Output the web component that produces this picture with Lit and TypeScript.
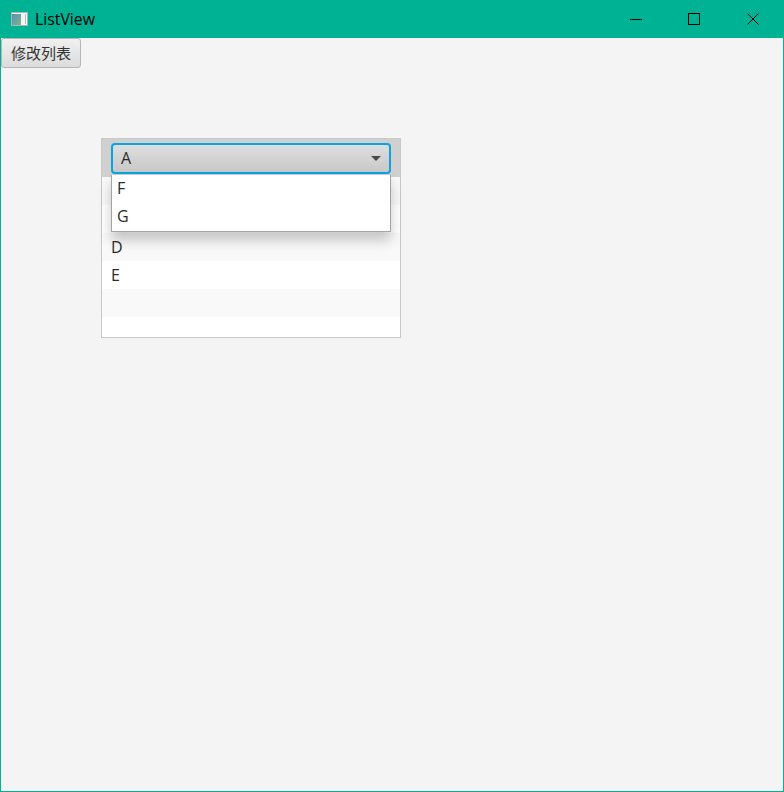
import { LitElement, html, css } from "lit";
import { customElement } from "lit/decorators.js";

@customElement("app-root")
export class AppRoot extends LitElement {
  static styles = css`
    :host { display: block; width: 784px; height: 792px; font-family: "Open Sans", "Noto Sans CJK SC", sans-serif; color: #333; }
    * { box-sizing: border-box; }
    .win { width: 784px; height: 792px; border: 1px solid #00b294; border-top: 0; background: #f4f4f4; display: flex; flex-direction: column; overflow: hidden; }
    .title { height: 38px; margin: 0 -1px; background: #00b294; display: flex; align-items: center; padding: 0 2px 0 11px; flex: none; }
    .title .app { display: block; margin-right: 7px; }
    .title .name { font-size: 15.8px; color: #000; flex: 1; line-height: 38px; }
    .ctrl { width: 58.5px; height: 38px; display: flex; align-items: center; justify-content: center; }
    .content { flex: 1; display: flex; flex-direction: column; align-items: flex-start; }
    .btn { width: 80px; height: 30px; border: 1px solid #b6b6b6; border-radius: 3px; background: linear-gradient(#f0f0f0, #dcdcdc); font-size: 15px; line-height: 26px; padding-bottom: 1px; color: #333; display: flex; align-items: center; justify-content: center; font-family: "Noto Sans CJK SC", sans-serif; }
    .list { position: relative; margin: 70px 0 0 100px; width: 300px; height: 200px; border: 1px solid #c8c8c8; background: #fff; }
    .row { height: 28px; padding-left: 9px; font-size: 16px; line-height: 29px; background: #fff; color: #2b2b2b; }
    .row.odd { background: #f9f9f9; }
    .row.last { height: 20px; }
    .row.edit { height: 38px; background: #d0d0d0; padding: 4px 9px 0; }
    .combo { height: 31px; border: 2px solid #0aa5e0; border-radius: 4px; background: linear-gradient(#dedede, #c8c8c8); display: flex; align-items: center; justify-content: space-between; padding: 0 8px 0 8px; font-size: 16px; line-height: 27px; }
    .arrow { width: 0; height: 0; border-left: 5px solid transparent; border-right: 5px solid transparent; border-top: 5px solid #4a4a4a; }
    .popup { position: absolute; left: 9px; top: 36px; width: 280px; height: 57px; border: 1px solid #a4a4a4; border-top: 0; background: #fff; box-shadow: 0 8px 12px rgba(0,0,0,.22); }
    .popup div { height: 28px; line-height: 27px; padding-left: 5px; font-size: 16px; color: #2b2b2b; }
  `;

  render() {
    return html`<div class="win">
      <div class="title">
        <svg class="app" width="17" height="14" viewBox="0 0 17 14">
          <defs><linearGradient id="g" x1="0" y1="0" x2="1" y2="1"><stop offset="0" stop-color="#5b8fb5"/><stop offset="1" stop-color="#7fb58a"/></linearGradient></defs>
          <rect x=".5" y=".5" width="16" height="13" fill="#f2f5f6" stroke="#a8b6ba"/>
          <rect x="1" y="2" width="9" height="11" fill="url(#g)"/>
          <rect x="14" y="2" width="1" height="10" fill="#b4c2c6"/>
        </svg>
        <span class="name">ListView</span>
        <div class="ctrl"><svg width="12" height="12" viewBox="0 0 12 12"><path d="M0 6.5H12" stroke="#000" fill="none"/></svg></div>
        <div class="ctrl"><svg width="12" height="12" viewBox="0 0 12 12"><rect x=".5" y=".5" width="11" height="11" stroke="#000" fill="none"/></svg></div>
        <div class="ctrl"><svg width="12" height="12" viewBox="0 0 12 12"><path d="M.5.5L11.5 11.5M11.5.5L.5 11.5" stroke="#000" fill="none"/></svg></div>
      </div>
      <div class="content">
        <div class="btn">修改列表</div>
        <div class="list">
          <div class="row edit"><div class="combo"><span>A</span><span class="arrow"></span></div></div>
          <div class="row odd"></div>
          <div class="row"></div>
          <div class="row odd">D</div>
          <div class="row">E</div>
          <div class="row odd"></div>
          <div class="row last"></div>
          <div class="popup"><div>F</div><div>G</div></div>
        </div>
      </div>
    </div>`;
  }
}
